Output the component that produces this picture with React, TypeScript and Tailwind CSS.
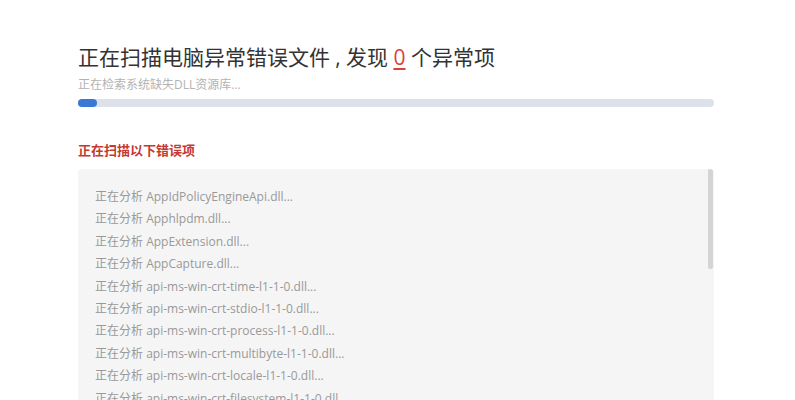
const files = [
  "AppIdPolicyEngineApi.dll",
  "Apphlpdm.dll",
  "AppExtension.dll",
  "AppCapture.dll",
  "api-ms-win-crt-time-l1-1-0.dll",
  "api-ms-win-crt-stdio-l1-1-0.dll",
  "api-ms-win-crt-process-l1-1-0.dll",
  "api-ms-win-crt-multibyte-l1-1-0.dll",
  "api-ms-win-crt-locale-l1-1-0.dll",
  "api-ms-win-crt-filesystem-l1-1-0.dll",
  "api-ms-win-crt-heap-l1-1-0.dll",
];

export default function App() {
  return (
    <div
      className="h-[400px] w-[795px] overflow-hidden bg-white pl-[78px] pt-[41px]"
      style={{ fontFamily: '"Open Sans", "Noto Sans CJK SC", sans-serif' }}
    >
      <h1 className="text-[21px] leading-[33px] font-normal text-[#333333]">
        正在扫描电脑异常错误文件<span className="inline-block w-[16px] text-center">,</span>发现{" "}
        <span className="text-[#d9413a] underline underline-offset-[3px]">0</span> 个异常项
      </h1>
      <p className="mt-[3px] text-[12px] leading-[16px] text-[#b3b3b3]">
        正在检索系统缺失DLL资源库...
      </p>
      <div className="mt-[6px] h-[8px] w-[636px] rounded-full bg-[#dde2ea]">
        <div className="h-full w-[19px] rounded-full bg-[#3a78d6]" />
      </div>

      <h2 className="mt-[34px] text-[13px] leading-[18px] font-bold text-[#c43a30]">
        正在扫描以下错误项
      </h2>

      <div className="relative mt-[10px] h-[231px] w-[636px] overflow-hidden rounded-t-[4px] bg-[#f5f5f5] pl-[17px] pt-[17px]">
        <ul className="text-[12px] leading-[22.4px] text-[#999999]">
          {files.map((f) => (
            <li key={f}>正在分析 {f}...</li>
          ))}
        </ul>
        <div className="absolute right-[1px] top-0 h-[100px] w-[5px] rounded-[2px] bg-[#d4d4d4]" />
      </div>
    </div>
  );
}
